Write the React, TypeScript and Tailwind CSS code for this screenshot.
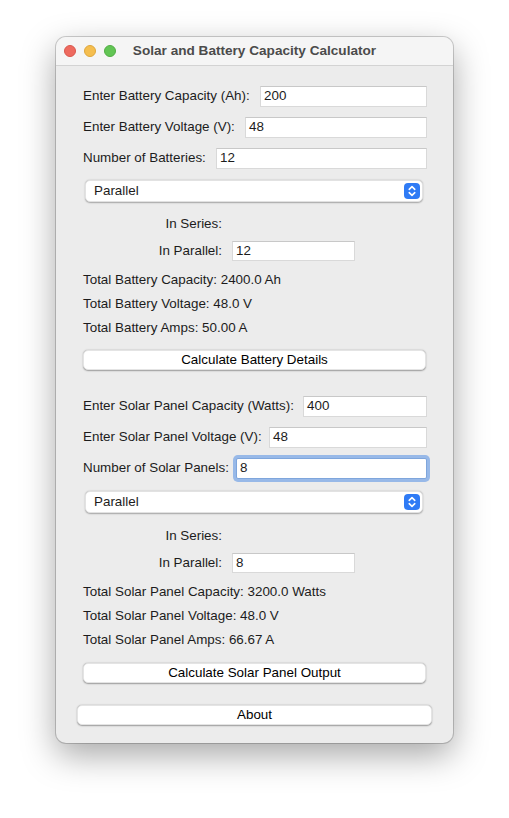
import React from "react";

const font = { fontFamily: '"Liberation Sans", Arial, Helvetica, sans-serif' };

function Field({ label, labelW, value, focused }: { label: string; labelW: string; value: string; focused?: boolean }) {
  return (
    <div className="flex items-center h-[21px]">
      <span className={`${labelW} shrink-0 whitespace-nowrap`}>{label}</span>
      <div
        className={
          focused
            ? "flex-1 h-[21px] bg-white flex items-center pl-[3px] rounded-[2px] ring-[3px] ring-[#98b9e8] border border-[#7fa6dc]"
            : "flex-1 h-[21px] bg-white flex items-center pl-[3px] border border-[#d9d9d9] border-t-[#c8c8c8]"
        }
      >
        {value}
      </div>
    </div>
  );
}

function Select() {
  return (
    <div className="ml-[2px] mr-[4px] h-[22px] bg-white rounded-[5px] shadow-[0_0.5px_1.5px_rgba(0,0,0,0.3)] border border-[#e2e2e2] flex items-center justify-between pl-[8px] pr-[2px]">
      <span>Parallel</span>
      <div className="w-[16px] h-[16px] rounded-[4px] bg-[#2f7bf5] flex items-center justify-center">
        <svg width="8" height="12" viewBox="0 0 8 12" fill="none" stroke="white" strokeWidth="1.6" strokeLinecap="round" strokeLinejoin="round">
          <path d="M1.2 4.3 L4 1.6 L6.8 4.3" />
          <path d="M1.2 7.7 L4 10.4 L6.8 7.7" />
        </svg>
      </div>
    </div>
  );
}

function Button({ children, className = "" }: { children: React.ReactNode; className?: string }) {
  return (
    <div
      className={`h-[20px] bg-white rounded-[5px] shadow-[0_0.5px_1.5px_rgba(0,0,0,0.35)] border border-[#e4e4e4] flex items-center justify-center text-black ${className}`}
    >
      {children}
    </div>
  );
}

function SeriesParallel({ value }: { value: string }) {
  return (
    <>
      <div className="flex items-center h-[21px]">
        <span className="w-[139px] text-right">In Series:</span>
      </div>
      <div className="flex items-center h-[20px] mt-[6px]">
        <span className="w-[139px] text-right">In Parallel:</span>
        <div className="ml-[10px] w-[123px] h-[20px] bg-white flex items-center pl-[3px] border border-[#d9d9d9] border-t-[#c8c8c8]">
          {value}
        </div>
      </div>
    </>
  );
}

function Totals({ lines }: { lines: string[] }) {
  return (
    <div className="flex flex-col gap-[4px] mt-[9px]">
      {lines.map((l) => (
        <div key={l} className="h-[20px] flex items-center">
          {l}
        </div>
      ))}
    </div>
  );
}

export default function App() {
  return (
    <div className="min-h-[818px] bg-white flex justify-center pt-[37px]" style={font}>
      <div className="w-[397px] h-[706px] rounded-[10px] overflow-hidden bg-[#ececec] shadow-[0_12px_34px_rgba(0,0,0,0.35),0_0_0_1px_rgba(0,0,0,0.18)] flex flex-col text-[13.4px] text-[#1c1c1c]">
        <div className="h-[29px] shrink-0 bg-[#f5f5f5] border-b border-[#d3d3d3] grid grid-cols-[1fr_auto_1fr] items-center">
          <div className="flex gap-[8px] pl-[8px]">
            <span className="w-[12px] h-[12px] rounded-full bg-[#ee6a5f] border border-[#d9574d]" />
            <span className="w-[12px] h-[12px] rounded-full bg-[#f5be4f] border border-[#dea73c]" />
            <span className="w-[12px] h-[12px] rounded-full bg-[#62c554] border border-[#52ad45]" />
          </div>
          <div className="font-bold text-[#4b4b4b] text-[13.6px]">Solar and Battery Capacity Calculator</div>
          <div />
        </div>

        <div className="flex flex-col pl-[27px] pr-[26px] pt-[20px]">
          <Field label="Enter Battery Capacity (Ah):" labelW="w-[177px]" value="200" />
          <div className="mt-[10px]">
            <Field label="Enter Battery Voltage (V):" labelW="w-[162px]" value="48" />
          </div>
          <div className="mt-[10px]">
            <Field label="Number of Batteries:" labelW="w-[133px]" value="12" />
          </div>
          <div className="mt-[11px]">
            <Select />
          </div>
          <div className="mt-[12px]">
            <SeriesParallel value="12" />
          </div>
          <Totals lines={["Total Battery Capacity: 2400.0 Ah", "Total Battery Voltage: 48.0 V", "Total Battery Amps: 50.00 A"]} />
          <Button className="mt-[12px] mr-[1px]">Calculate Battery Details</Button>

          <div className="mt-[26px]">
            <Field label="Enter Solar Panel Capacity (Watts):" labelW="w-[220px]" value="400" />
          </div>
          <div className="mt-[10px]">
            <Field label="Enter Solar Panel Voltage (V):" labelW="w-[186px]" value="48" />
          </div>
          <div className="mt-[10px]">
            <Field label="Number of Solar Panels:" labelW="w-[153px]" value="8" focused />
          </div>
          <div className="mt-[12px]">
            <Select />
          </div>
          <div className="mt-[13px]">
            <SeriesParallel value="8" />
          </div>
          <Totals lines={["Total Solar Panel Capacity: 3200.0 Watts", "Total Solar Panel Voltage: 48.0 V", "Total Solar Panel Amps: 66.67 A"]} />
          <Button className="mt-[13px] mr-[1px]">Calculate Solar Panel Output</Button>
        </div>

        <div className="px-[21px] mt-[22px]">
          <Button>About</Button>
        </div>
      </div>
    </div>
  );
}
